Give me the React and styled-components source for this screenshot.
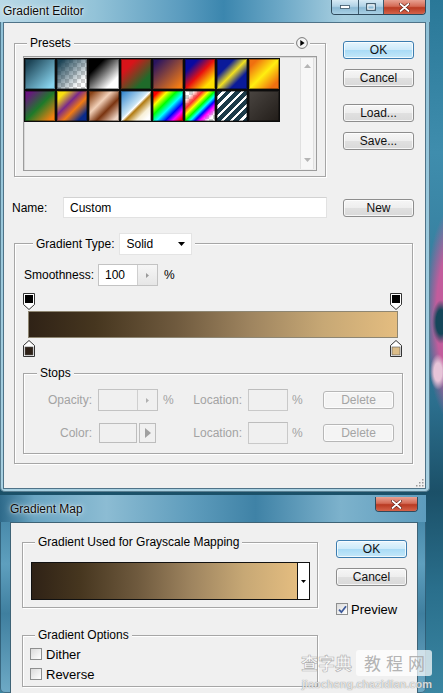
import React from "react";
import styled, { createGlobalStyle } from "styled-components";

const GlobalStyle = createGlobalStyle`
  html, body { margin: 0; padding: 0; }
  body {
    background: #1d5670;
    font-family: "Liberation Sans", Arial, sans-serif;
    font-size: 12px;
    color: #000;
  }
  * { box-sizing: border-box; }
`;

const Desktop = styled.div`
  position: relative;
  width: 443px;
  height: 693px;
  overflow: hidden;
  display: flex;
  flex-direction: column;
  align-items: flex-start;
  background:
    radial-gradient(ellipse 9px 22px at 441px 322px, #15465a 0 55%, rgba(21,70,90,0) 100%),
    radial-gradient(ellipse 8px 18px at 438px 372px, #e6c4d8 0 50%, rgba(230,196,216,0) 100%),
    radial-gradient(ellipse 30px 110px at 455px 315px, #c25c9c 0 62%, rgba(194,92,156,0) 100%),
    linear-gradient(180deg, #2a7898 0%, #3f8dad 22%, #2c6f8e 58%, #1b5068 71%, #2a6f8c 85%, #3a86a2 100%);
`;

const Window = styled.div`
  display: flex;
  flex-direction: column;
  flex: ${(p) => (p.$grow ? 1 : "none")};
  width: ${(p) => p.$w}px;
  height: ${(p) => (p.$h ? `${p.$h}px` : "auto")};
  margin-top: ${(p) => p.$mt || 0}px;
  background: ${(p) => p.$frame};
  border-radius: 0 0 5px 5px;
  box-shadow: inset 0 0 0 1px rgba(25, 60, 80, 0.55);
`;

const TitleBar = styled.div`
  height: ${(p) => p.$h}px;
  flex: none;
  display: flex;
  justify-content: space-between;
  align-items: flex-start;
  padding-left: ${(p) => p.$pl}px;
  padding-right: ${(p) => p.$pr}px;
  background: ${(p) => p.$bg};
`;

const TitleText = styled.span`
  font-size: 12px;
  line-height: 14px;
  margin-top: ${(p) => p.$mt}px;
  color: #0b0b0b;
  text-shadow: 0 0 6px rgba(255, 255, 255, 0.9), 0 0 2px rgba(255, 255, 255, 0.9);
`;

const Controls = styled.div`
  display: flex;
  margin-top: ${(p) => p.$mt || 0}px;
  height: 15px;
  border: 1px solid #2f4a5c;
  border-top: none;
  border-radius: 0 0 4px 4px;
  overflow: hidden;
`;

const CtrlBtn = styled.div`
  width: ${(p) => p.$w}px;
  display: flex;
  align-items: center;
  justify-content: center;
  border-left: ${(p) => (p.$first ? "none" : "1px solid #3c5a6e")};
  background: ${(p) =>
    p.$close
      ? "linear-gradient(180deg, #e8a192 0%, #d46a55 45%, #b93a22 55%, #d4634a 100%)"
      : "linear-gradient(180deg, #d7eaf5 0%, #b0d2e6 45%, #8bb9d4 55%, #a9d0e4 100%)"};
`;

const Client1 = styled.div`
  position: relative;
  margin: 0 4px 0 3px;
  height: 467px;
  background: #f0f0f0;
  border: 1px solid #4f7388;
  padding: 18px 13px 0 10px;
`;

const Client2 = styled.div`
  flex: 1;
  margin-left: 10px;
  width: 408px;
  background: #f0f0f0;
  border: 1px solid #3e6376;
  border-bottom: none;
  padding: 19px 0 0 11px;
  display: flex;
  align-items: flex-start;
`;

const TopRow = styled.div`
  display: flex;
  align-items: flex-start;
`;

const Group = styled.div`
  position: relative;
  flex: none;
  width: ${(p) => p.$w}px;
  height: ${(p) => p.$h}px;
  margin-top: ${(p) => p.$mt || 0}px;
  padding: ${(p) => p.$pad || "0"};
  border: 1px solid #a6a6a6;
  box-shadow: inset 1px 1px 0 #fff, 1px 1px 0 #fff;
`;

const Legend = styled.div`
  position: absolute;
  top: ${(p) => p.$top ?? -8}px;
  left: ${(p) => p.$left ?? 12}px;
  display: flex;
  align-items: center;
  gap: 4px;
  padding: 0 3px;
  line-height: 14px;
  background: #f0f0f0;
  color: ${(p) => (p.$dim ? "#a3a3a3" : "#000")};
`;

const MenuDot = styled.div`
  position: absolute;
  top: -7px;
  right: 15px;
  padding: 0 2px;
  background: #f0f0f0;
  display: flex;
`;

const ListBox = styled.div`
  width: 294px;
  height: 115px;
  border: 1px solid #9c9c9c;
  box-shadow: inset 1px 1px 0 #d8d8d8;
  background: #efefef;
  display: flex;
  padding: 0 2px 0 0;
`;

const SwatchGrid = styled.div`
  flex: 1;
  display: grid;
  grid-template-columns: repeat(8, 32px);
  grid-auto-rows: 32px;
  align-content: start;
  padding-top: 1px;
`;

const Swatch = styled.div`
  border: 1px solid #0c0c0c;
  box-shadow: inset 0 0 0 1px rgba(0, 0, 0, 0.35);
  background: ${(p) => p.$bg};
`;

const ScrollBar = styled.div`
  width: 14px;
  margin: 1px 0;
  border-left: 1px solid #e0e0e0;
  border-right: 1px solid #e0e0e0;
  background: #f7f7f7;
  display: flex;
  flex-direction: column;
  justify-content: space-between;
  align-items: center;
  padding: 6px 0 7px;
`;

const ButtonCol = styled.div`
  display: flex;
  flex-direction: column;
  margin-left: ${(p) => p.$ml}px;
  margin-top: ${(p) => p.$mt || 0}px;
`;

const Btn = styled.div`
  width: 71px;
  height: 18px;
  flex: none;
  margin-top: ${(p) => p.$mt || 0}px;
  margin-left: ${(p) => p.$ml || 0}px;
  display: flex;
  align-items: center;
  justify-content: center;
  font-size: 12px;
  color: ${(p) => (p.$disabled ? "#a4a4a4" : "#111")};
  border: 1px solid ${(p) => (p.$primary ? "#3c7db0" : p.$disabled ? "#b7b7b7" : "#8d8d8d")};
  border-radius: 3px;
  background: ${(p) =>
    p.$primary
      ? "linear-gradient(180deg, #e6f5fd 0%, #cdeafa 48%, #a9dbf6 52%, #c4e8f9 100%)"
      : p.$disabled
      ? "#f4f4f4"
      : "linear-gradient(180deg, #f6f6f6 0%, #eeeeee 48%, #e0e0e0 52%, #d9d9d9 100%)"};
  box-shadow: inset 0 0 0 1px rgba(255, 255, 255, 0.75);
`;

const NameRow = styled.div`
  display: flex;
  align-items: center;
  margin: 20px 0 0 -2px;
`;

const FieldLabel = styled.span`
  width: ${(p) => p.$w}px;
  flex: none;
  text-align: ${(p) => (p.$right ? "right" : "left")};
  margin-right: ${(p) => p.$mr || 0}px;
  color: ${(p) => (p.$dim ? "#a3a3a3" : "#000")};
  white-space: nowrap;
`;

const TextBox = styled.div`
  width: ${(p) => p.$w}px;
  height: ${(p) => p.$h}px;
  flex: none;
  display: flex;
  align-items: center;
  padding-left: 6px;
  background: ${(p) => (p.$dim ? "#f0f0f0" : "#fff")};
  border: 1px solid ${(p) => (p.$dim ? "#c9c9c9" : "#e2e2e2")};
  border-top-color: ${(p) => (p.$dim ? "#bdbdbd" : "#d2d2d2")};
`;

const SpinBox = styled.div`
  width: 60px;
  height: 22px;
  flex: none;
  display: flex;
  background: ${(p) => (p.$dim ? "#f0f0f0" : "#fff")};
  border: 1px solid #c3c3c3;
`;

const SpinText = styled.div`
  flex: 1;
  display: flex;
  align-items: center;
  padding-left: 6px;
`;

const SpinArrow = styled.div`
  width: 20px;
  display: flex;
  align-items: center;
  justify-content: center;
  border-left: 1px solid #cfcfcf;
  background: ${(p) => (p.$dim ? "#f0f0f0" : "linear-gradient(#f6f6f6, #e6e6e6)")};
`;

const SelectBox = styled.div`
  width: 73px;
  height: 22px;
  display: flex;
  align-items: center;
  justify-content: space-between;
  padding: 0 6px 0 7px;
  background: #fff;
  border: 1px solid #e4e4e4;
`;

const GradientInner = styled.div`
  display: flex;
  flex-direction: column;
`;

const SmoothRow = styled.div`
  display: flex;
  align-items: center;
  height: 22px;
  margin-left: 1px;
`;

const Unit = styled.span`
  width: 11px;
  flex: none;
  margin-left: ${(p) => p.$ml}px;
  color: ${(p) => (p.$dim ? "#a3a3a3" : "#000")};
`;

const Rail = styled.div`
  width: 380px;
  margin-top: 7px;
  display: flex;
  flex-direction: column;
`;

const StopLane = styled.div`
  position: relative;
  height: 17px;
  margin-top: ${(p) => p.$mt || 0}px;
`;

const Marker = styled.div`
  position: absolute;
  top: 0;
  ${(p) => (p.$side === "left" ? "left: 0;" : "right: 1px;")}
  width: 12px;
  height: 17px;
  display: flex;
`;

const Bar = styled.div`
  height: 27px;
  margin: 1px 5px 0 5px;
  border: 1px solid #8e8672;
  background: ${(p) => p.$bg};
`;

const StopsRows = styled.div`
  display: flex;
  flex-direction: column;
  gap: 11px;
`;

const StopRow = styled.div`
  display: flex;
  align-items: center;
  height: 22px;
`;

const ColorSlot = styled.div`
  width: 60px;
  flex: none;
  display: flex;
  gap: 2px;
  padding-left: 1px;
`;

const ColorBox = styled.div`
  width: 38px;
  height: 20px;
  border: 1px solid #bdbdbd;
  background: #f0f0f0;
`;

const ColorArrow = styled.div`
  width: 17px;
  height: 20px;
  border: 1px solid #bdbdbd;
  display: flex;
  align-items: center;
  justify-content: center;
`;

const Grip = styled.div`
  position: absolute;
  right: 1px;
  bottom: 1px;
  display: flex;
`;

const LeftCol = styled.div`
  width: 296px;
  flex: none;
  display: flex;
  flex-direction: column;
`;

const MapPreview = styled.div`
  width: 279px;
  height: 38px;
  display: flex;
  border: 1px solid #111;
`;

const MapGradient = styled.div`
  flex: 1;
  background: ${(p) => p.$bg};
`;

const MapDrop = styled.div`
  width: 12px;
  border-left: 1px solid #111;
  background: #fff;
  display: flex;
  align-items: center;
  justify-content: center;
`;

const CheckList = styled.div`
  display: flex;
  flex-direction: column;
  gap: 8px;
`;

const CheckRow = styled.div`
  display: flex;
  align-items: center;
  height: 12px;
  margin-top: ${(p) => p.$mt || 0}px;
  font-size: 13px;
`;

const Check = styled.span`
  width: 12px;
  height: 12px;
  flex: none;
  margin-right: ${(p) => p.$mr}px;
  border: 1px solid #8e8f8f;
  background: linear-gradient(135deg, #dadada 0%, #f4f4f4 70%, #fff 100%);
  display: flex;
  align-items: center;
  justify-content: center;
`;

const Watermark = styled.div`
  position: absolute;
  right: 11px;
  bottom: 2px;
  display: flex;
  flex-direction: column;
  align-items: flex-end;
  pointer-events: none;
`;

const WmTop = styled.div`
  display: flex;
  align-items: center;
  gap: 4px;
`;

const WmBrand = styled.span`
  font-family: "Noto Sans CJK SC", sans-serif;
  font-size: 17px;
  font-weight: 700;
  line-height: 24px;
  color: rgba(255, 255, 255, 0.6);
  -webkit-text-stroke: 0.6px rgba(150, 150, 150, 0.75);
`;

const WmBox = styled.span`
  font-family: "Noto Sans CJK SC", sans-serif;
  font-size: 17px;
  line-height: 26px;
  letter-spacing: 5px;
  padding: 0 2px 0 8px;
  border-radius: 3px;
  color: rgba(170, 170, 170, 0.9);
  background: rgba(255, 255, 255, 0.72);
`;

const WmUrl = styled.span`
  font-family: "Liberation Sans", Arial, sans-serif;
  font-size: 11px;
  font-weight: 700;
  line-height: 14px;
  margin-top: 1px;
  color: rgba(255, 255, 255, 0.75);
  text-shadow: 0 0 1px rgba(90, 90, 90, 0.8);
`;

const checker =
  "conic-gradient(#cfcfcf 25%, #ffffff 0 50%, #cfcfcf 0 75%, #ffffff 0) 0 0 / 8px 8px";

const swatches = [
  "linear-gradient(135deg, #1d4456 12%, #88d4ee 88%)",
  `linear-gradient(135deg, #1d4456 10%, rgba(29,68,86,0) 80%), ${checker}`,
  "linear-gradient(135deg, #000 25%, #fff 78%)",
  "linear-gradient(135deg, #d8141a 25%, #1f6b2a 75%)",
  "linear-gradient(135deg, #2a1560 10%, #f47c14 90%)",
  "linear-gradient(135deg, #0a0aa0 22%, #e81010 50%, #ffe000 80%)",
  "linear-gradient(135deg, #0a1a9a 28%, #f0e020 50%, #0a1a9a 72%)",
  "linear-gradient(135deg, #f07010 15%, #ffee10 50%, #f07010 85%)",
  "linear-gradient(135deg, #6a1480 10%, #1e7a2a 50%, #f48010 90%)",
  "linear-gradient(135deg, #f8e010 15%, #7a2a8a 40%, #f07a14 60%, #0a2a8a 85%)",
  "linear-gradient(135deg, #8a4418 8%, #f2d0b8 38%, #7a3410 62%, #eed4c4 90%)",
  "linear-gradient(135deg, #3a8ad0 5%, #c8e4f4 45%, #ffffff 50%, #b07a10 56%, #f8f0d8 75%, #ffffff 90%)",
  "linear-gradient(135deg, #ff0000 10%, #ffff00 25%, #00ff00 40%, #00ffff 55%, #0000ff 70%, #ff00ff 82%, #ff0000 95%)",
  `linear-gradient(135deg, rgba(255,0,0,0) 15%, #ff3030 30%, #ffff00 40%, #00ff00 50%, #00ffff 58%, #0000ff 66%, #ff00ff 74%, rgba(255,0,255,0) 88%), ${checker}`,
  `repeating-linear-gradient(135deg, #1c3a48 0 4px, #ffffff 4px 6.5px), ${checker}`,
  "linear-gradient(135deg, #4a4541, #221d19)",
];

const mainGradient =
  "linear-gradient(90deg, #2f2216 0%, #46361f 18%, #6f5a3e 40%, #9e845f 60%, #c7a875 80%, #e4bd80 100%)";

const TriRight = ({ c = "#9a9a9a", w = 3, h = 5 }) => (
  <svg width={w} height={h} viewBox={`0 0 ${w} ${h}`}>
    <path d={`M0 0L${w} ${h / 2}L0 ${h}Z`} fill={c} />
  </svg>
);

const TriDown = ({ c = "#000", w = 7, h = 4 }) => (
  <svg width={w} height={h} viewBox={`0 0 ${w} ${h}`}>
    <path d={`M0 0H${w}L${w / 2} ${h}Z`} fill={c} />
  </svg>
);

const TriUp = ({ c = "#b5b5b5" }) => (
  <svg width="7" height="4" viewBox="0 0 7 4">
    <path d="M0 4H7L3.5 0Z" fill={c} />
  </svg>
);

const StopTop = ({ color }) => (
  <svg width="12" height="17" viewBox="0 0 12 17">
    <path d="M0.5 0.5H11.5V11.5L6 16.5L0.5 11.5Z" fill="#fff" stroke="#333" />
    <rect x="2" y="2" width="8" height="8" fill={color} />
  </svg>
);

const StopBottom = ({ color }) => (
  <svg width="12" height="17" viewBox="0 0 12 17">
    <path d="M6 0.5L11.5 5.5V16.5H0.5V5.5Z" fill="#fff" stroke="#333" />
    <rect x="2" y="7" width="8" height="8" fill={color} stroke="#555" strokeWidth="0.6" />
  </svg>
);

const CircleArrow = () => (
  <svg width="12" height="12" viewBox="0 0 12 12">
    <circle cx="6" cy="6" r="5.4" fill="#f4f4f4" stroke="#6a6a6a" strokeWidth="0.9" />
    <path d="M4.3 3L8.6 6L4.3 9Z" fill="#000" />
  </svg>
);

const MinIcon = () => (
  <svg width="10" height="4" viewBox="0 0 10 4">
    <rect x="0.5" y="0.5" width="9" height="3" fill="#fff" stroke="#3b5566" strokeWidth="0.8" />
  </svg>
);

const MaxIcon = () => (
  <svg width="10" height="8" viewBox="0 0 10 8">
    <rect x="0.8" y="0.8" width="8.4" height="6.4" fill="none" stroke="#3b5566" strokeWidth="1.4" />
    <rect x="1.8" y="1.8" width="6.4" height="4.4" fill="none" stroke="#fff" strokeWidth="1" />
  </svg>
);

const CloseIcon = () => (
  <svg width="11" height="9" viewBox="0 0 11 9">
    <path d="M1.5 1L9.5 8M9.5 1L1.5 8" stroke="#5a1a10" strokeWidth="3" strokeLinecap="round" />
    <path d="M1.5 1L9.5 8M9.5 1L1.5 8" stroke="#fff" strokeWidth="1.8" strokeLinecap="round" />
  </svg>
);

const CheckMark = () => (
  <svg width="9" height="9" viewBox="0 0 9 9">
    <path d="M1 4.6L3.4 7.2L8 1.2" fill="none" stroke="#3d5a9a" strokeWidth="1.8" />
  </svg>
);

const GripDots = () => (
  <svg width="9" height="9" viewBox="0 0 9 9">
    {[
      [7, 1],
      [7, 4],
      [4, 4],
      [7, 7],
      [4, 7],
      [1, 7],
    ].map(([x, y]) => (
      <rect key={`${x}-${y}`} x={x} y={y} width="1.5" height="1.5" fill="#9a9a9a" />
    ))}
  </svg>
);

export default function App() {
  return (
    <>
      <GlobalStyle />
      <Desktop>
        <Window
          $w={430}
          $h={492}
          $frame="linear-gradient(180deg, #8fc0d6 0%, #9cc9dc 50%, #a8d0e1 100%)"
        >
          <TitleBar
            $h={22}
            $pl={3}
            $pr={4}
            $bg="linear-gradient(90deg, #b9d9e7 0%, #93c3d8 22%, #5b9cbf 42%, #3b86ae 52%, #6faac8 66%, #a8cfe0 80%, #86bbd3 100%)"
          >
            <TitleText $mt={4}>Gradient Editor</TitleText>
            <Controls>
              <CtrlBtn $w={26} $first>
                <MinIcon />
              </CtrlBtn>
              <CtrlBtn $w={25}>
                <MaxIcon />
              </CtrlBtn>
              <CtrlBtn $w={42} $close>
                <CloseIcon />
              </CtrlBtn>
            </Controls>
          </TitleBar>

          <Client1>
            <TopRow>
              <Group $w={312} $h={134} $mt={2} $pad="12px 8px 5px 8px">
                <Legend>Presets</Legend>
                <MenuDot>
                  <CircleArrow />
                </MenuDot>
                <ListBox>
                  <SwatchGrid>
                    {swatches.map((bg, i) => (
                      <Swatch key={i} $bg={bg} />
                    ))}
                  </SwatchGrid>
                  <ScrollBar>
                    <TriUp />
                    <TriDown c="#b5b5b5" />
                  </ScrollBar>
                </ListBox>
              </Group>
              <ButtonCol $ml={17}>
                <Btn $primary>OK</Btn>
                <Btn $mt={10}>Cancel</Btn>
                <Btn $mt={17}>Load...</Btn>
                <Btn $mt={10}>Save...</Btn>
              </ButtonCol>
            </TopRow>

            <NameRow>
              <FieldLabel $w={51}>Name:</FieldLabel>
              <TextBox $w={264} $h={21}>
                Custom
              </TextBox>
              <Btn $ml={16}>New</Btn>
            </NameRow>

            <Group $w={399} $h={221} $mt={25} $pad="20px 0 0 8px">
              <Legend $top={-11} $left={18}>
                <span>Gradient Type:</span>
                <SelectBox>
                  <span>Solid</span>
                  <TriDown />
                </SelectBox>
              </Legend>
              <GradientInner>
                <SmoothRow>
                  <FieldLabel $w={74}>Smoothness:</FieldLabel>
                  <SpinBox>
                    <SpinText>100</SpinText>
                    <SpinArrow>
                      <TriRight />
                    </SpinArrow>
                  </SpinBox>
                  <Unit $ml={6}>%</Unit>
                </SmoothRow>

                <Rail>
                  <StopLane>
                    <Marker $side="left">
                      <StopTop color="#000" />
                    </Marker>
                    <Marker $side="right">
                      <StopTop color="#000" />
                    </Marker>
                  </StopLane>
                  <Bar $bg={mainGradient} />
                  <StopLane $mt={2}>
                    <Marker $side="left">
                      <StopBottom color="#2e2117" />
                    </Marker>
                    <Marker $side="right">
                      <StopBottom color="#dcbd88" />
                    </Marker>
                  </StopLane>
                </Rail>

                <Group $w={380} $h={81} $mt={16} $pad="15px 0 0 0">
                  <Legend $left={13}>Stops</Legend>
                  <StopsRows>
                    <StopRow>
                      <FieldLabel $w={68} $right $mr={6} $dim>
                        Opacity:
                      </FieldLabel>
                      <SpinBox $dim>
                        <SpinText />
                        <SpinArrow $dim>
                          <TriRight c="#b0b0b0" />
                        </SpinArrow>
                      </SpinBox>
                      <Unit $ml={5} $dim>
                        %
                      </Unit>
                      <FieldLabel $w={68} $right $mr={6} $dim>
                        Location:
                      </FieldLabel>
                      <TextBox $w={40} $h={22} $dim />
                      <Unit $ml={4} $dim>
                        %
                      </Unit>
                      <Btn $ml={20} $disabled>
                        Delete
                      </Btn>
                    </StopRow>
                    <StopRow>
                      <FieldLabel $w={68} $right $mr={6} $dim>
                        Color:
                      </FieldLabel>
                      <ColorSlot>
                        <ColorBox />
                        <ColorArrow>
                          <TriRight c="#a0a0a0" w={6} h={10} />
                        </ColorArrow>
                      </ColorSlot>
                      <Unit $ml={5} />
                      <FieldLabel $w={68} $right $mr={6} $dim>
                        Location:
                      </FieldLabel>
                      <TextBox $w={40} $h={22} $dim />
                      <Unit $ml={4} $dim>
                        %
                      </Unit>
                      <Btn $ml={20} $disabled>
                        Delete
                      </Btn>
                    </StopRow>
                  </StopsRows>
                </Group>
              </GradientInner>
            </Group>
            <Grip>
              <GripDots />
            </Grip>
          </Client1>
        </Window>

        <Window
          $w={426}
          $mt={3}
          $grow
          $frame="linear-gradient(180deg, #3c7d9e 0%, #5e9fbe 35%, #3f7f9f 60%, #6eaac6 100%)"
        >
          <TitleBar
            $h={27}
            $pl={10}
            $pr={8}
            $bg="linear-gradient(90deg, #2e6a8a 0%, #6aa5c2 8%, #8cbcd3 25%, #5e9cbc 45%, #3f82a6 60%, #7db2cc 80%, #5d9cbd 100%)"
          >
            <TitleText $mt={7}>Gradient Map</TitleText>
            <Controls $mt={2}>
              <CtrlBtn $w={41} $close $first>
                <CloseIcon />
              </CtrlBtn>
            </Controls>
          </TitleBar>
          <Client2>
            <LeftCol>
              <Group $w={296} $h={66} $pad="19px 0 0 8px">
                <Legend>Gradient Used for Grayscale Mapping</Legend>
                <MapPreview>
                  <MapGradient $bg={mainGradient} />
                  <MapDrop>
                    <TriDown w={5} h={3} />
                  </MapDrop>
                </MapPreview>
              </Group>
              <Group $w={296} $h={52} $mt={27} $pad="12px 0 0 7px">
                <Legend>Gradient Options</Legend>
                <CheckList>
                  <CheckRow>
                    <Check $mr={4} />
                    Dither
                  </CheckRow>
                  <CheckRow>
                    <Check $mr={4} />
                    Reverse
                  </CheckRow>
                </CheckList>
              </Group>
            </LeftCol>
            <ButtonCol $ml={18} $mt={-2}>
              <Btn $primary>OK</Btn>
              <Btn $mt={10}>Cancel</Btn>
              <CheckRow $mt={17}>
                <Check $mr={3}>
                  <CheckMark />
                </Check>
                Preview
              </CheckRow>
            </ButtonCol>
          </Client2>
        </Window>

        <Watermark>
          <WmTop>
            <WmBrand>查字典</WmBrand>
            <WmBox>教程网</WmBox>
          </WmTop>
          <WmUrl>jiaocheng.chazidian.com</WmUrl>
        </Watermark>
      </Desktop>
    </>
  );
}
